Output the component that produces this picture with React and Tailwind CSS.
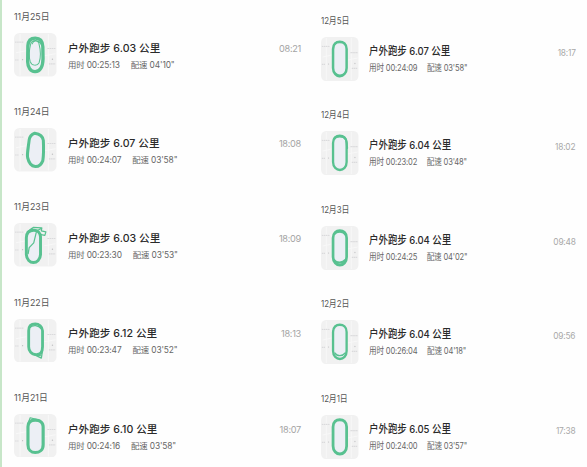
const november = [
  { date: '11月25日', km: '6.03', time: '00:25:13', pace: `04'10"`, at: '08:21', track: 'double' },
  { date: '11月24日', km: '6.07', time: '00:24:07', pace: `03'58"`, at: '18:08', track: 'peak' },
  { date: '11月23日', km: '6.03', time: '00:23:30', pace: `03'53"`, at: '18:09', track: 'detour' },
  { date: '11月22日', km: '6.12', time: '00:23:47', pace: `03'52"`, at: '18:13', track: 'tail' },
  { date: '11月21日', km: '6.10', time: '00:24:16', pace: `03'58"`, at: '18:07', track: 'corner' }
]

const december = [
  { date: '12月5日', km: '6.07', time: '00:24:09', pace: `03'58"`, at: '18:17', track: 'plain' },
  { date: '12月4日', km: '6.04', time: '00:23:02', pace: `03'48"`, at: '18:02', track: 'top' },
  { date: '12月3日', km: '6.04', time: '00:24:25', pace: `04'02"`, at: '09:48', track: 'thick' },
  { date: '12月2日', km: '6.04', time: '00:26:04', pace: `04'18"`, at: '09:56', track: 'bottom' },
  { date: '12月1日', km: '6.05', time: '00:24:00', pace: `03'57"`, at: '17:38', track: 'even' }
]

const OVAL = 'M13.5 12C13.5 7 17 4.8 21 4.8S28.7 7 28.7 12V31C28.7 36 25 39 21.2 39S13.5 36 13.5 31Z'

// each track is a list of [path, stroke width]
const tracks = {
  double: [
    ['M13.7 13C14 7.5 16.5 5.2 21 5.200S28.300 8 28.500 14L28.700 26C28.500 34 26 38.800 21 39S13.600 34 13.500 29Z', 3.3],
    ['M27 12C25 6.500 18 6 16.500 11C15 17 14.700 24 16 29C17.500 33.500 23 33.500 24.800 30C26.500 25 26 16 24.500 10C23 7 19 7.500 18 11', 1]
  ],
  peak: [
    ['M15 12C15.500 8.500 18 6.300 20.500 5.300C25 6 28.500 8.500 29 12.500C29.300 19 29.500 26 28.500 33C27 37 24 39.200 21 39C16.500 38.500 14.500 35 13.500 30C12.500 26 14.300 19 15 12Z', 3],
    ['M14.200 17L13.700 31', 2]
  ],
  detour: [
    ['M12.200 15C12.300 9.500 15.500 7.300 19.500 7.300S26 10 26.200 14V32C26 37 22.500 40 19.200 40S12.400 37 12.200 32Z', 2.9],
    ['M13 9L19 4.500L27.500 5L27 8L31.500 9L30.500 12.500L25.500 11.500M14 31L15 25L19.500 20L22 9.500M17 5.500L22 8L27 5.500', 1.2]
  ],
  tail: [
    ['M14.500 12C14.500 7 17.500 5 21 5S28.200 7.500 28.200 12V28C28.200 33 26 36 22 36C17 36 14.500 32 14.500 28Z', 2.8],
    ['M18 35L27 39.500L28 33M15 9C19 5.500 24 6 27 10M22 36L26 37', 1.3]
  ],
  corner: [
    ['M13.800 13C13.800 8 17 6.200 21 6.200S28.800 8.500 28.800 13V31C28.800 36.500 25 39 21 39S13.800 36 13.800 31Z', 3.1],
    ['M14.500 8L16 3.800L26 6.500', 1.2]
  ],
  plain: [[OVAL, 2.8], ['M13 18L14.500 8L18 5M20 39.500L26 37', 1.5]],
  top: [[OVAL, 2.6], ['M14.500 8C17 4.500 25 4.500 27.500 8M28.500 10L29.300 17', 2.2]],
  thick: [[OVAL, 3], ['M15 8C18 5 25 5 27.500 9M15 34C17 37 24 37.500 27 34', 2]],
  bottom: [[OVAL, 2.6], ['M15.500 33C18 36.500 24 36.500 27 33M13.200 11V21', 1.4]],
  even: [[OVAL, 3.1]]
}

function TrackMap({ track, className }) {
  return (
    <svg viewBox="0 0 42 44" preserveAspectRatio="none" className={className}>
      <rect width="42" height="44" rx="5.500" fill="#f1f1f1" />
      <path d="M1 9H12M2 20L12 18M30 23L41 21M6 1V43M34 1V43" stroke="#f8f8f8" strokeWidth="1" fill="none" />
      <path d="M1 9.300H10M33 15.700H41M1 27.300H4.500M34.500 31.300H41" stroke="#dadadc" strokeWidth="1.200" strokeDasharray="1.600 .5" />
      <circle cx="8.500" cy="27" r=".6" fill="#bcbcbe" />
      <circle cx="38" cy="26.500" r=".7" fill="#c2c2c4" />
      <path d={tracks[track][0][0]} fill="#eceff5" />
      {tracks[track].map(([d, width]) => (
        <path key={d} d={d} fill="none" stroke="#58c190" strokeWidth={width} strokeLinejoin="round" strokeLinecap="round" />
      ))}
    </svg>
  )
}

function NovemberRun({ run }) {
  return (
    <li className="h-[95.2px]">
      <p className="h-3 text-[8.8px] leading-3 text-[#555]">{run.date}</p>
      <div className="mt-[10px] flex h-[43.5px] items-center">
        <TrackMap track={run.track} className="h-[43.5px] w-[42.500px] shrink-0" />
        <div className="ml-[11.5px] flex-1 pt-[3px]">
          <p className="text-[10.6px] leading-[17px] font-medium tracking-[0.03px] text-[#2a2a2a]">户外跑步 {run.km} 公里</p>
          <p className="flex gap-[11px] text-[8.4px] leading-4 tracking-[-0.13px] text-[#666]">
            <span>用时 {run.time}</span>
            <span>配速 {run.pace}</span>
          </p>
        </div>
        <span className="mb-[12px] text-[9.2px] leading-4 tracking-[-0.3px] text-[#a4a4a4]">{run.at}</span>
      </div>
    </li>
  )
}

function DecemberRun({ run }) {
  return (
    <li className="h-[94.5px]">
      <p className="h-3 origin-left scale-x-[0.86] text-[9.2px] leading-3 tracking-[-0.1px] text-[#555]">{run.date}</p>
      <div className="mt-[10px] flex h-11 items-center">
        <TrackMap track={run.track} className="h-11 w-[37.5px] shrink-0" />
        <div className="ml-[10.5px] flex-1 origin-left scale-x-[0.87] pt-[1.5px] whitespace-nowrap">
          <p className="text-[10.9px] leading-[17px] font-medium tracking-[-0.03px] text-[#2a2a2a]">户外跑步 {run.km} 公里</p>
          <p className="flex gap-[11px] text-[8.7px] leading-4 tracking-[-0.17px] text-[#666]">
            <span>用时 {run.time}</span>
            <span>配速 {run.pace}</span>
          </p>
        </div>
        <span className="mr-px mb-[12px] origin-right scale-x-[0.87] text-[9.6px] leading-4 tracking-[-0.25px] text-[#a8a8a8]">{run.at}</span>
      </div>
    </li>
  )
}

export default function App() {
  return (
    <main className="flex h-[467px] w-[587px] overflow-hidden border-l-2 border-[#c7e6c8] bg-[#fefefe] font-[Inter,'Noto_Sans_CJK_SC',sans-serif]">
      <ul className="w-[299px] shrink-0 pt-[11px] pl-3">
        {november.map((run) => (
          <NovemberRun key={run.date} run={run} />
        ))}
      </ul>
      <ul className="ml-5 w-[255.5px] shrink-0 pt-[14.5px]">
        {december.map((run) => (
          <DecemberRun key={run.date} run={run} />
        ))}
      </ul>
    </main>
  )
}
